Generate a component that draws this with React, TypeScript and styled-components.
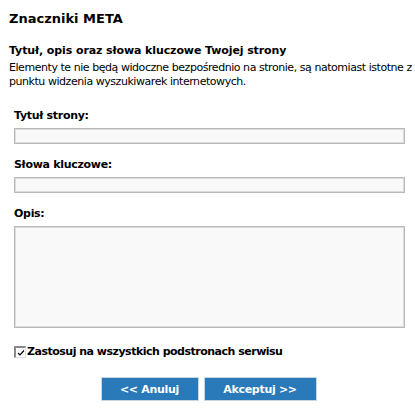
import styled, { createGlobalStyle } from "styled-components";

const GlobalStyle = createGlobalStyle`
  body {
    margin: 0;
    background: #ffffff;
    font-family: "DejaVu Sans", Verdana, sans-serif;
    color: #000000;
  }
`;

function App() {
  return (
    <>
      <GlobalStyle />
      <Panel>
        <Title>Znaczniki META</Title>
        <Subtitle>Tytuł, opis oraz słowa kluczowe Twojej strony</Subtitle>
        <Description>
          Elementy te nie będą widoczne bezpośrednio na stronie, są natomiast istotne z
          <br />
          punktu widzenia wyszukiwarek internetowych.
        </Description>
        <Form>
          <Field>
            <Label>Tytuł strony:</Label>
            <TextInput type="text" />
          </Field>
          <Field>
            <Label>Słowa kluczowe:</Label>
            <TextInput type="text" />
          </Field>
          <Field>
            <Label>Opis:</Label>
            <TextArea />
          </Field>
          <CheckRow>
            <CheckBox>
              <svg width="8" height="8" viewBox="0 0 8 8">
                <path d="M1 4 L3 6 L7 1.5" stroke="#000" strokeWidth="1.2" fill="none" />
              </svg>
            </CheckBox>
            <CheckLabel>Zastosuj na wszystkich podstronach serwisu</CheckLabel>
          </CheckRow>
          <Buttons>
            <Button width="98px">&lt;&lt; Anuluj</Button>
            <Button width="113px">Akceptuj &gt;&gt;</Button>
          </Buttons>
        </Form>
      </Panel>
    </>
  );
}

export default App;

const Panel = styled.div`
  width: 415px;
  padding: 11px 0 0 9px;
  box-sizing: border-box;
`;

const Title = styled.h1`
  margin: 0;
  font-size: 13px;
  line-height: 16px;
  font-weight: bold;
`;

const Subtitle = styled.h2`
  margin: 17px 0 0 0;
  font-size: 11px;
  line-height: 14px;
  font-weight: bold;
  letter-spacing: -0.1px;
`;

const Description = styled.p`
  margin: 3px 0 0 0;
  font-size: 11px;
  line-height: 14px;
  letter-spacing: -0.45px;
  white-space: nowrap;
`;

const Form = styled.div`
  display: flex;
  flex-direction: column;
  padding: 0 10px 0 5px;
  margin-top: 20px;
`;

const Field = styled.div`
  display: flex;
  flex-direction: column;
  gap: 5px;
  margin-bottom: 14px;
`;

const Label = styled.label`
  font-size: 11px;
  line-height: 14px;
  font-weight: bold;
  letter-spacing: -0.3px;
`;

const TextInput = styled.input`
  height: 16px;
  box-sizing: border-box;
  border: 1px solid #b9b9b9;
  box-shadow: inset 0 0 0 1px #dcdcdc;
  background: #f9f9f9;
  margin: 0;
  padding: 0 3px;
`;

const TextArea = styled.textarea`
  height: 102px;
  box-sizing: border-box;
  border: 1px solid #b9b9b9;
  box-shadow: inset 0 0 0 1px #dcdcdc;
  background: #f9f9f9;
  margin: 0;
  resize: none;
`;

const CheckRow = styled.div`
  display: flex;
  align-items: center;
  gap: 1px;
  margin-top: 3px;
`;

const CheckBox = styled.span`
  width: 12px;
  height: 12px;
  box-sizing: border-box;
  border-top: 2px solid #8a8a8a;
  border-left: 2px solid #8a8a8a;
  border-right: 1px solid #e0e0e0;
  border-bottom: 1px solid #e0e0e0;
  background: #ffffff;
  display: flex;
  align-items: center;
  justify-content: center;
`;

const CheckLabel = styled.span`
  font-size: 11px;
  line-height: 14px;
  font-weight: bold;
  letter-spacing: -0.5px;
`;

const Buttons = styled.div`
  display: flex;
  justify-content: center;
  gap: 5px;
  margin-top: 18px;
  padding-right: 2px;
`;

const Button = styled.button<{ width: string }>`
  width: ${(p) => p.width};
  height: 24px;
  background: #2a79b9;
  border: 1px solid #c8d6e2;
  color: #ffffff;
  font-family: "DejaVu Sans", Verdana, sans-serif;
  font-size: 11px;
  font-weight: bold;
  letter-spacing: -0.3px;
  padding: 0;
`;
